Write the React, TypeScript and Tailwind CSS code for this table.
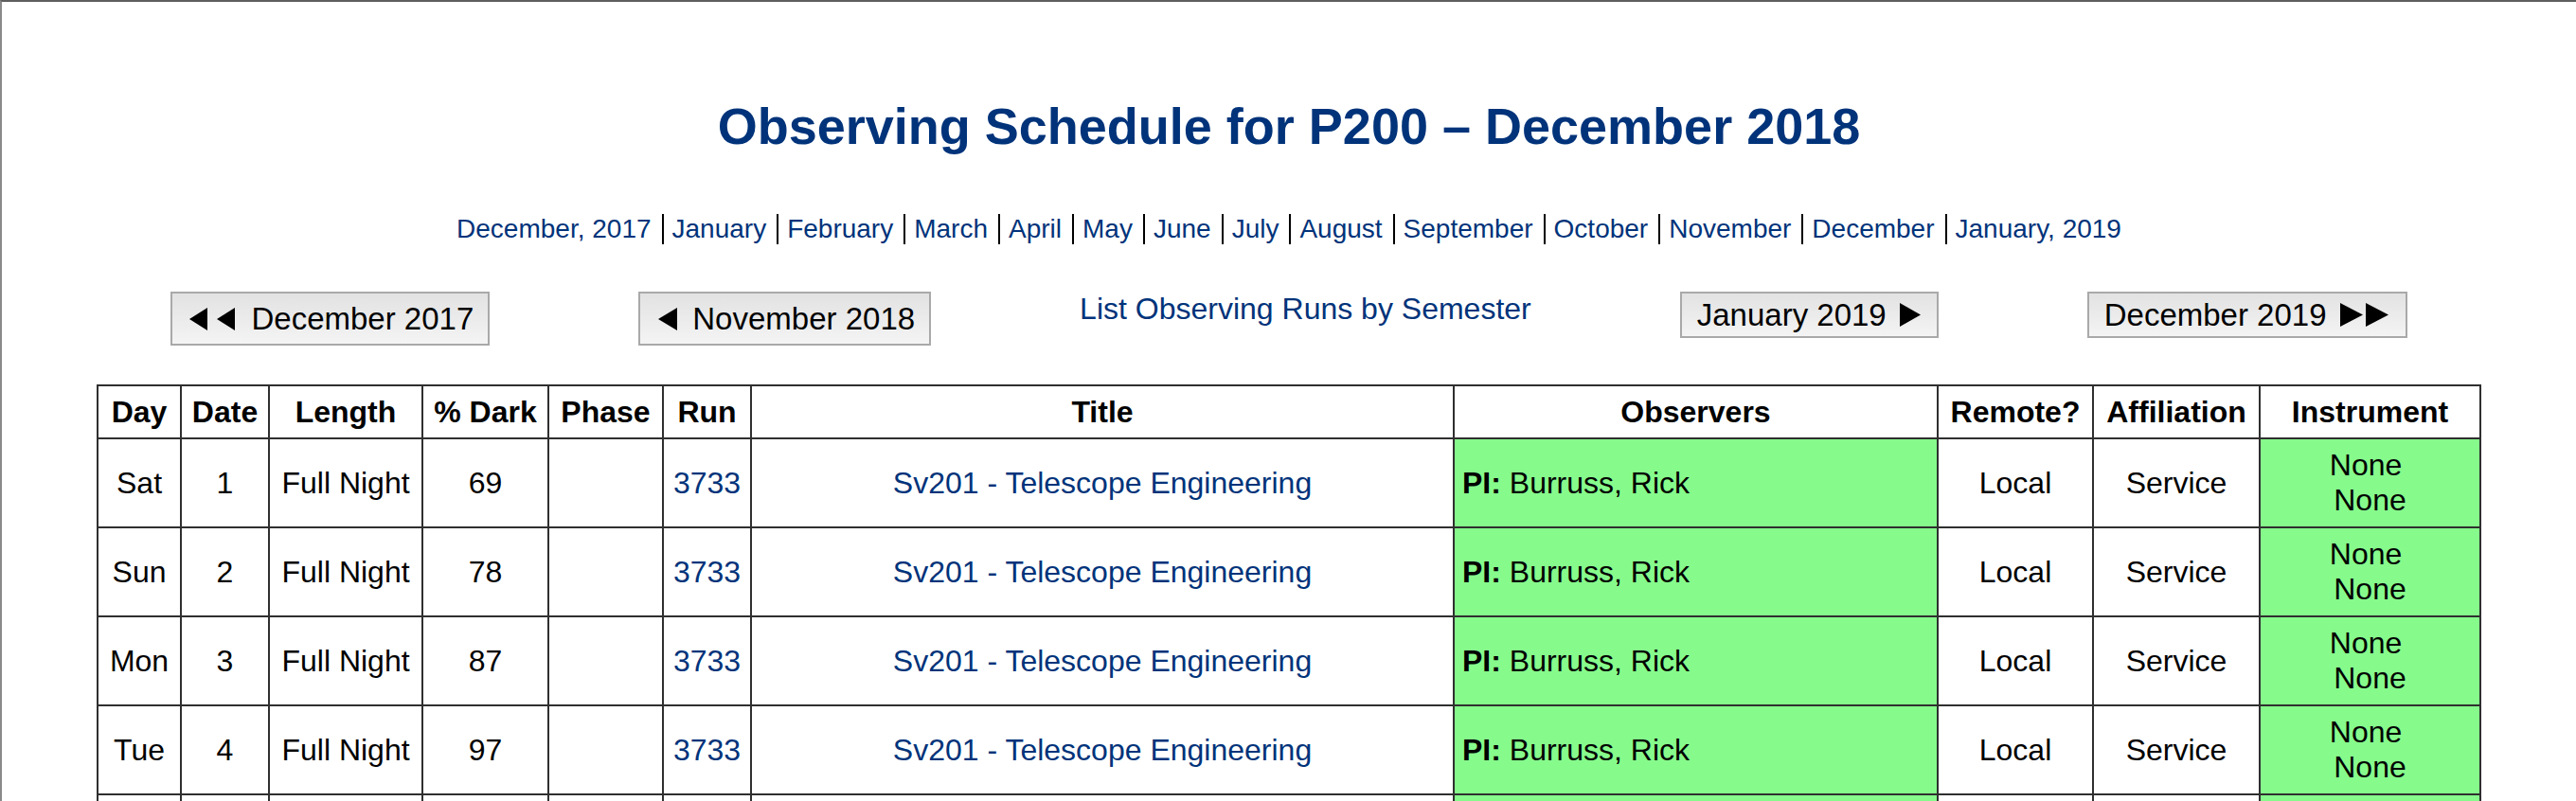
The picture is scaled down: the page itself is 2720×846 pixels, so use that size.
import React from "react";

const months = [
  "December, 2017",
  "January",
  "February",
  "March",
  "April",
  "May",
  "June",
  "July",
  "August",
  "September",
  "October",
  "November",
  "December",
  "January, 2019",
];

const headers = [
  "Day",
  "Date",
  "Length",
  "% Dark",
  "Phase",
  "Run",
  "Title",
  "Observers",
  "Remote?",
  "Affiliation",
  "Instrument",
];

const nights = [
  { day: "Sat", date: 1, dark: 69 },
  { day: "Sun", date: 2, dark: 78 },
  { day: "Mon", date: 3, dark: 87 },
  { day: "Tue", date: 4, dark: 97 },
  { day: "Wed", date: 5, dark: 100 },
  { day: "Thu", date: 6, dark: 100 },
];

const Left = ({ w = 19, h = 24 }: { w?: number; h?: number }) => (
  <svg width={w} height={h} viewBox={`0 0 ${w} ${h}`}>
    <polygon points={`${w},0 ${w},${h} 0,${h / 2}`} fill="#000" />
  </svg>
);

const Right = ({ w = 22, h = 25 }: { w?: number; h?: number }) => (
  <svg width={w} height={h} viewBox={`0 0 ${w} ${h}`}>
    <polygon points={`0,0 0,${h} ${w},${h / 2}`} fill="#000" />
  </svg>
);

const btn =
  "flex items-center border-2 border-[#a9a9a9] bg-linear-to-b from-[#e2e2e2] to-[#f4f4f4] text-[33px] leading-[normal] text-black font-['Liberation_Sans',Arial,sans-serif]";

const cell = "flex items-center justify-center text-center bg-white";

const App: React.FC = () => {
  return (
    <div className="h-[846px] overflow-hidden bg-white leading-[normal] border-t-2 border-l-2 border-t-[#5e5e5e] border-l-[#8a8a8a] font-['Liberation_Sans',Arial,sans-serif]">
      <h1 className="pt-[104px] text-center font-bold text-[54px] leading-none text-[#00337a]">
        Observing Schedule for P200 – December 2018
      </h1>

      {/* month links */}
      <div className="mt-[66px] flex justify-center text-[28px] text-[#00337a]">
        {months.map((m, i) => (
          <div key={i} className="flex">
            {i > 0 && <span className="ml-[11px] mr-[9px] w-[2px] bg-black" />}
            <a href="#">{m}</a>
          </div>
        ))}
      </div>

      {/* prev / next */}
      <div className="mt-[50px] flex items-start justify-center gap-[157px]">
        <button className={`${btn} h-[57px] pl-[18px] pr-[15px]`}>
          <Left />
          <span className="ml-[10px]">
            <Left />
          </span>
          <span className="ml-[17px]">December 2017</span>
        </button>
        <button className={`${btn} h-[57px] pl-[19px] pr-[15px]`}>
          <Left w={20} />
          <span className="ml-[16px]">November 2018</span>
        </button>
        <a href="#" className="text-[32px] text-[#00337a]">
          List Observing Runs by Semester
        </a>
        <button className={`${btn} h-[49px] pl-[16px] pr-[17px]`}>
          <span className="mr-[14px]">January 2019</span>
          <Right />
        </button>
        <button className={`${btn} h-[49px] pl-[16px] pr-[18px]`}>
          <span className="mr-[14px]">December 2019</span>
          <Right w={24} />
          <span className="ml-[3px]">
            <Right w={24} />
          </span>
        </button>
      </div>

      {/* schedule table */}
      <div className="mt-[41px] mx-auto w-fit grid gap-[2px] p-[2px] bg-[#2f2f2f] grid-cols-[86px_91px_160px_131px_119px_91px_740px_509px_162px_174px_231px] text-[32px] text-black">
        {headers.map((h) => (
          <div key={h} className={`${cell} h-[54px] font-bold`}>
            {h}
          </div>
        ))}
        {nights.map((n) => (
          <React.Fragment key={n.date}>
            <div className={`${cell} h-[92px]`}>{n.day}</div>
            <div className={`${cell} h-[92px]`}>{n.date}</div>
            <div className={`${cell} h-[92px]`}>Full Night</div>
            <div className={`${cell} h-[92px]`}>{n.dark}</div>
            <div className={`${cell} h-[92px]`}></div>
            <div className={`${cell} h-[92px] text-[#00337a]`}>
              <a href="#">3733</a>
            </div>
            <div className={`${cell} h-[92px] text-[#00337a]`}>
              <a href="#">Sv201 - Telescope Engineering</a>
            </div>
            <div className="flex h-[92px] items-center bg-[#86fb8c] pl-[8px]">
              <b>PI:</b>&nbsp;Burruss, Rick
            </div>
            <div className={`${cell} h-[92px]`}>Local</div>
            <div className={`${cell} h-[92px]`}>Service</div>
            <div className="flex h-[92px] items-center justify-center bg-[#86fb8c] text-center">
              <span>
                None{"\u00a0"}
                <br />
                None
              </span>
            </div>
          </React.Fragment>
        ))}
      </div>
    </div>
  );
};

export default App;
